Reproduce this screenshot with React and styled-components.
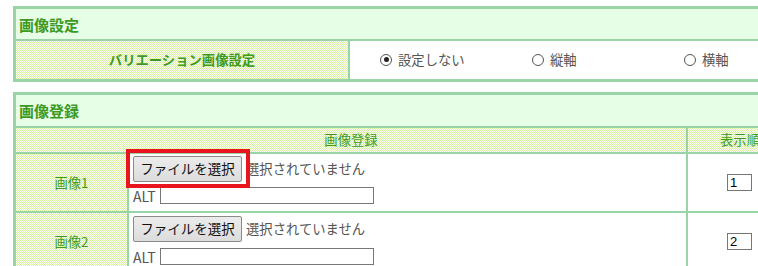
import React from "react";
import styled, { createGlobalStyle } from "styled-components";

const GlobalStyle = createGlobalStyle`
  html, body { margin: 0; padding: 0; overflow: hidden; background: #fff; }
  body { font-family: "Noto Sans CJK JP", "Noto Sans", sans-serif; font-size: 13.33px; }
`;

const BORDER = "#99d4a6";
const GREEN_TEXT = "#3d9a1f";
const hatch = `#fff url("data:image/svg+xml,%3Csvg xmlns='http://www.w3.org/2000/svg' width='2' height='2' shape-rendering='crispEdges'%3E%3Crect width='1' height='1' fill='%23d6f29a'/%3E%3Crect x='1' y='1' width='1' height='1' fill='%23d6f29a'/%3E%3C/svg%3E") 0 0 / 2px 2px repeat fixed`;

const Page = styled.div`
  padding: 6px 0 0 13px;
  display: flex;
  flex-direction: column;
  gap: 10px;
  width: 782px;
`;

const Box = styled.section`
  display: grid;
  grid-template-columns: ${(p) => p.$cols};
  gap: 2px;
  background: ${BORDER};
  border: 3px solid ${BORDER};
  width: 776px;
`;

const Header = styled.h2`
  grid-column: 1 / -1;
  margin: 0;
  height: ${(p) => p.$h}px;
  background: #e6fde6;
  color: ${GREEN_TEXT};
  font-size: 15px;
  font-weight: bold;
  display: flex;
  align-items: center;
  padding-left: 3px;
  line-height: 1;
`;

const LabelCell = styled.div`
  background: ${hatch};
  color: ${GREEN_TEXT};
  font-weight: ${(p) => (p.$bold ? "bold" : "normal")};
  grid-column: ${(p) => p.$span || "auto"};
  height: ${(p) => p.$h}px;
  display: flex;
  align-items: center;
  justify-content: center;
  line-height: 1;
`;

const ValueCell = styled.div`
  background: #fff;
  display: flex;
  align-items: center;
  padding-left: 30px;
  overflow: hidden;
`;

const Option = styled.label`
  flex: 0 0 152px;
  display: flex;
  align-items: center;
  gap: 6px;
  color: #555;
  line-height: 1;
`;

const Radio = styled.span`
  width: 12px;
  height: 12px;
  box-sizing: border-box;
  border-radius: 50%;
  border: 1.5px solid #555;
  display: flex;
  align-items: center;
  justify-content: center;
  &::after {
    content: "";
    width: 5px;
    height: 5px;
    border-radius: 50%;
    background: ${(p) => (p.$checked ? "#222" : "transparent")};
  }
`;

const ContentCell = styled.div`
  background: #fff;
  height: 57px;
  box-sizing: border-box;
  padding: ${(p) => p.$pt}px 4px 0;
  display: flex;
  flex-direction: column;
  gap: ${(p) => p.$gap}px;
`;

const FileLine = styled.div`
  display: flex;
  align-items: center;
  gap: 4px;
  color: #555;
  line-height: 1;
`;

const ButtonWrap = styled.span`
  position: relative;
  display: inline-flex;
  &::after {
    content: "";
    display: ${(p) => (p.$highlight ? "block" : "none")};
    position: absolute;
    left: -7px;
    right: -8px;
    top: -7px;
    bottom: -6px;
    border: 4px solid #e8141e;
    pointer-events: none;
  }
`;

const FileButton = styled.button`
  height: 26px;
  width: 109px;
  padding: 0;
  font-family: inherit;
  font-size: 13.5px;
  color: #111;
  background: linear-gradient(#ececec, #dcdcdc);
  border: 1px solid #8a8a8a;
  border-radius: 2px;
  line-height: 1;
`;

const AltLine = styled.div`
  display: flex;
  align-items: center;
  gap: 4px;
  color: #555;
  font-size: 14px;
  line-height: 1;
`;

const TextInput = styled.input`
  box-sizing: border-box;
  width: ${(p) => p.$w}px;
  height: 17px;
  border: 1px solid #777;
  padding: 0 2px;
  font-family: "Liberation Sans", sans-serif;
  font-size: 13px;
  color: #000;
  background: #fff;
  outline: none;
`;

const OrderCell = styled.div`
  background: #fff;
  display: flex;
  align-items: center;
  justify-content: center;
  padding-right: 1px;
`;

const rows = [
  { label: "画像1", order: "1", highlight: true, pt: 2, gap: 5 },
  { label: "画像2", order: "2", highlight: false, pt: 3, gap: 6 },
];

export default function App() {
  return (
    <>
      <GlobalStyle />
      <Page>
        <Box $cols="332px 442px">
          <Header $h={30}>画像設定</Header>
          <LabelCell $bold $h={38}>バリエーション画像設定</LabelCell>
          <ValueCell>
            <Option>
              <Radio $checked />
              設定しない
            </Option>
            <Option>
              <Radio />
              縦軸
            </Option>
            <Option>
              <Radio />
              横軸
            </Option>
          </ValueCell>
        </Box>
        <Box $cols="111px 557px 104px">
          <Header $h={31}>画像登録</Header>
          <LabelCell $span="1 / 3" $h={24}>画像登録</LabelCell>
          <LabelCell $h={24}>表示順</LabelCell>
          {rows.map((r) => (
            <React.Fragment key={r.label}>
              <LabelCell $h={57}>{r.label}</LabelCell>
              <ContentCell $pt={r.pt} $gap={r.gap}>
                <FileLine>
                  <ButtonWrap $highlight={r.highlight}>
                    <FileButton type="button">ファイルを選択</FileButton>
                  </ButtonWrap>
                  選択されていません
                </FileLine>
                <AltLine>
                  ALT
                  <TextInput $w={214} type="text" />
                </AltLine>
              </ContentCell>
              <OrderCell>
                <TextInput $w={25} type="text" defaultValue={r.order} />
              </OrderCell>
            </React.Fragment>
          ))}
        </Box>
      </Page>
    </>
  );
}
